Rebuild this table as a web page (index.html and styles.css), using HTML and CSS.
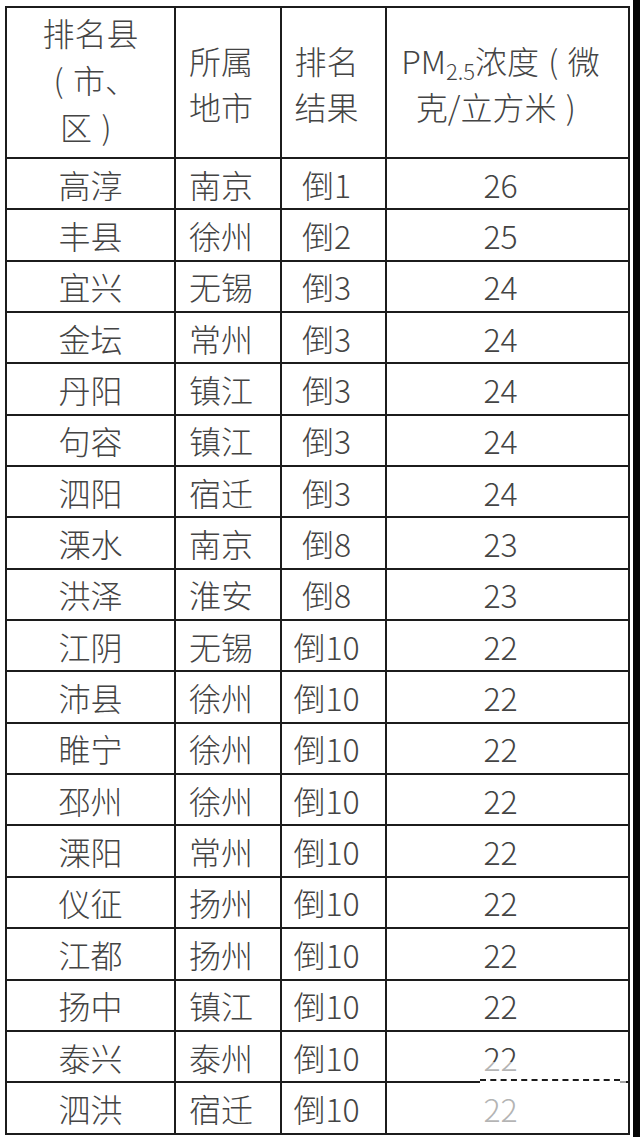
FILE: index.html
```html
<!DOCTYPE html>
<html lang="zh-CN">
<head>
<meta charset="utf-8">
<title>PM2.5 排名</title>
<link rel="stylesheet" href="styles.css">
</head>
<body>
<div class="page">
  <div class="sheet">
    <table class="rank">
      <colgroup>
        <col class="c1"><col class="c2"><col class="c3"><col class="c4">
      </colgroup>
      <thead>
        <tr class="head">
          <th class="first">排名县<br><span class="par">(</span>市、<br>区<span class="par">)</span></th>
          <th>所属<br>地市</th>
          <th>排名<br>结果</th>
          <th class="pm">PM<span class="sub">2.5</span>浓度<span class="par">(</span>微<br>克/立方米<span class="par">)</span></th>
        </tr>
      </thead>
      <tbody>
        <tr><td class="first">高淳</td><td>南京</td><td>倒1</td><td>26</td></tr>
        <tr><td class="first">丰县</td><td>徐州</td><td>倒2</td><td>25</td></tr>
        <tr><td class="first">宜兴</td><td>无锡</td><td>倒3</td><td>24</td></tr>
        <tr><td class="first">金坛</td><td>常州</td><td>倒3</td><td>24</td></tr>
        <tr><td class="first">丹阳</td><td>镇江</td><td>倒3</td><td>24</td></tr>
        <tr><td class="first">句容</td><td>镇江</td><td>倒3</td><td>24</td></tr>
        <tr><td class="first">泗阳</td><td>宿迁</td><td>倒3</td><td>24</td></tr>
        <tr><td class="first">溧水</td><td>南京</td><td>倒8</td><td>23</td></tr>
        <tr><td class="first">洪泽</td><td>淮安</td><td>倒8</td><td>23</td></tr>
        <tr><td class="first">江阴</td><td>无锡</td><td>倒10</td><td>22</td></tr>
        <tr><td class="first">沛县</td><td>徐州</td><td>倒10</td><td>22</td></tr>
        <tr><td class="first">睢宁</td><td>徐州</td><td>倒10</td><td>22</td></tr>
        <tr><td class="first">邳州</td><td>徐州</td><td>倒10</td><td>22</td></tr>
        <tr><td class="first">溧阳</td><td>常州</td><td>倒10</td><td>22</td></tr>
        <tr><td class="first">仪征</td><td>扬州</td><td>倒10</td><td>22</td></tr>
        <tr><td class="first">江都</td><td>扬州</td><td>倒10</td><td>22</td></tr>
        <tr><td class="first">扬中</td><td>镇江</td><td>倒10</td><td>22</td></tr>
        <tr><td class="first">泰兴</td><td>泰州</td><td>倒10</td><td>22</td></tr>
        <tr><td class="first">泗洪</td><td>宿迁</td><td>倒10</td><td>22</td></tr>
      </tbody>
    </table>
    <div class="smudge"></div>
    <div class="smudge-line"></div>
  </div>
  <div class="edge"></div>
</div>
</body>
</html>
```
FILE: styles.css
```css
html, body {
  margin: 0;
  padding: 0;
  background: #fff;
}

.page {
  display: flex;
  width: 640px;
  height: 1137px;
  overflow: hidden;
}

.sheet {
  position: relative;
  width: 633px;
  padding: 6px 0 0 5px;
  box-sizing: border-box;
}

.edge {
  width: 7px;
  background: #050505;
}

.rank {
  border-collapse: collapse;
  table-layout: fixed;
  width: 623px;
  font-family: "Noto Sans CJK SC", "Noto Sans", sans-serif;
  font-size: 32px;
  font-weight: 300;
  color: #444;
}

.c1 { width: 169px; }
.c2 { width: 106px; }
.c3 { width: 105px; }
.c4 { width: 243px; }

.rank th,
.rank td {
  border: 2px solid #1c1c1c;
  text-align: center;
  vertical-align: middle;
  padding: 0 14px 0 0;
  line-height: 46px;
  font-weight: 300;
  white-space: nowrap;
}

.rank .first {
  padding: 0;
}

.rank .head {
  height: 151px;
}

.rank .head th {
  line-height: 46px;
}

.rank .head th.first {
  line-height: 47px;
  padding-bottom: 6px;
}

.rank .head th.pm {
  padding-right: 14px;
}

.par {
  display: inline-block;
  width: 0.9em;
  text-align: center;
}

.rank tbody tr {
  height: 51.35px;
}

.sub {
  font-size: 22px;
  vertical-align: -6px;
  line-height: 0;
}

.smudge {
  position: absolute;
  left: 480px;
  top: 1062px;
  width: 146px;
  height: 68px;
  background: rgba(255, 255, 255, 0.6);
}

.smudge-line {
  position: absolute;
  left: 480px;
  top: 1080px;
  width: 140px;
  height: 2px;
  background: #fff;
  border-top: 2px dashed #1c1c1c;
  margin-top: -1px;
}
```
